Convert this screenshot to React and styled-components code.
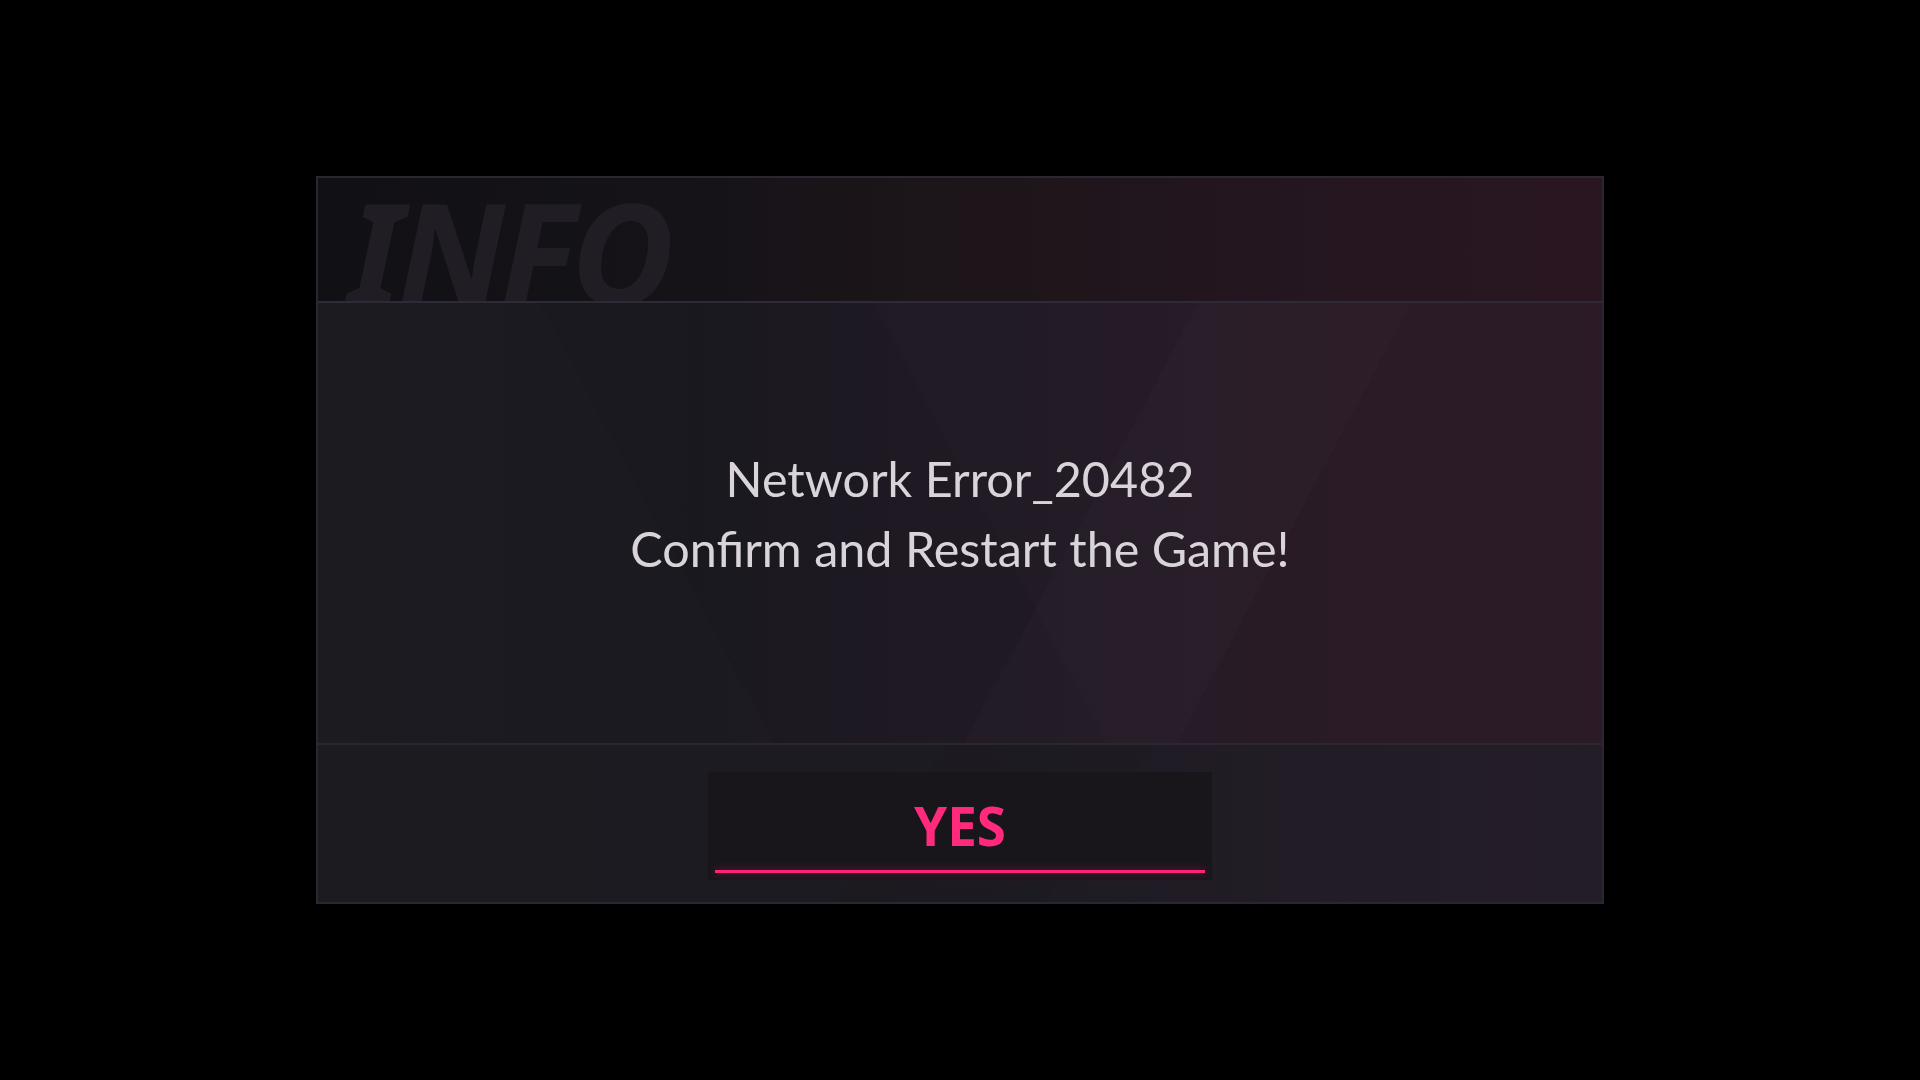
import React from "react";
import styled, { createGlobalStyle } from "styled-components";

const Global = createGlobalStyle`
  html, body { margin: 0; padding: 0; background: #000; }
  body { font-family: "Noto Sans", "Liberation Sans", sans-serif; }
`;

const Page = styled.div`
  width: 1920px;
  height: 1080px;
  display: flex;
  align-items: center;
  justify-content: center;
  background: #000;
`;

const Dialog = styled.div`
  width: 1288px;
  height: 728px;
  box-sizing: border-box;
  border: 2px solid #2a2632;
  display: flex;
  flex-direction: column;
  overflow: hidden;
`;

const Header = styled.div`
  height: 123px;
  flex: none;
  overflow: hidden;
  display: flex;
  align-items: flex-start;
  padding-left: 30px;
  border-bottom: 2px solid #2e2a37;
  background: linear-gradient(90deg, #111015 0%, #151318 28%, #1d1519 50%, #241620 75%, #2a1620 100%);
`;

const Watermark = styled.div`
  font-family: "Noto Sans", sans-serif;
  font-weight: 700;
  font-style: italic;
  font-size: 142px;
  line-height: 1;
  letter-spacing: -5px;
  color: #211d25;
  margin-top: 2px;
  user-select: none;
`;

const Body = styled.div`
  height: 442px;
  flex: none;
  box-sizing: border-box;
  border-bottom: 2px solid #2a2733;
  display: flex;
  flex-direction: column;
  align-items: center;
  justify-content: center;
  padding-bottom: 20px;
  background:
    linear-gradient(118deg, transparent 58%, rgba(255,255,255,0.012) 58%, rgba(255,255,255,0.012) 72%, transparent 72%),
    linear-gradient(62deg, transparent 30%, rgba(0,0,0,0.06) 30%, rgba(0,0,0,0.06) 52%, transparent 52%),
    linear-gradient(90deg, #1b1b20 0%, #1c1a21 30%, #221b26 55%, #2a1b26 80%, #2c1b26 100%);
`;

const Message = styled.p`
  margin: 0;
  font-family: "Lato", "Noto Sans", sans-serif;
  font-size: 48.5px;
  font-weight: 400;
  line-height: 70px;
  color: #d8d4da;
  text-align: center;
`;

const Footer = styled.div`
  flex: 1;
  display: flex;
  justify-content: center;
  align-items: flex-start;
  padding-top: 27px;
  background:
    linear-gradient(125deg, transparent 45%, rgba(0,0,0,0.05) 45%, rgba(0,0,0,0.05) 60%, transparent 60%),
    linear-gradient(90deg, #1b1b20 0%, #1d1b22 45%, #211c25 75%, #241d28 100%);
`;

const YesButton = styled.button`
  width: 504px;
  height: 108px;
  box-sizing: border-box;
  border: none;
  background: #18161b;
  position: relative;
  display: flex;
  align-items: flex-start;
  justify-content: center;
  padding: 22px 0 0;
  cursor: pointer;
  font-family: "Noto Sans", sans-serif;
  font-weight: 700;
  font-size: 53px;
  line-height: 1.2;
  color: #ff2a7c;
`;

const Underline = styled.span`
  position: absolute;
  left: 7px;
  right: 7px;
  bottom: 7px;
  height: 3px;
  background: #ff2479;
  box-shadow: 0 0 10px rgba(255, 36, 121, 0.45);
`;

export default function App() {
  return (
    <>
      <Global />
      <Page>
        <Dialog>
          <Header>
            <Watermark>INFO</Watermark>
          </Header>
          <Body>
            <Message>Network Error_20482</Message>
            <Message>Confirm and Restart the Game!</Message>
          </Body>
          <Footer>
            <YesButton>
              YES
              <Underline />
            </YesButton>
          </Footer>
        </Dialog>
      </Page>
    </>
  );
}
